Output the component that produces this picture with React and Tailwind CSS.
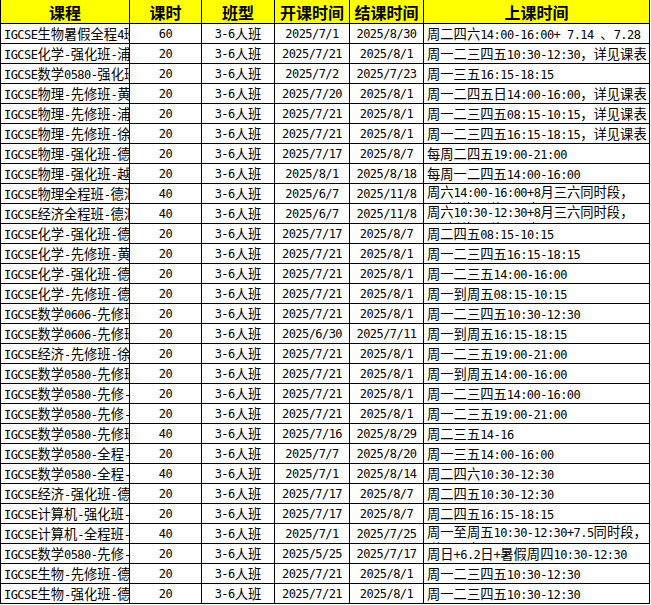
import React from 'react';

const rows = [
  ['IGCSE生物暑假全程4班', '60', '2025/7/1', '2025/8/30', '周二四六14:00-16:00+ 7.14 、7.28'],
  ['IGCSE化学-强化班-浦东', '20', '2025/7/21', '2025/8/1', '周一二三四五10:30-12:30，详见课表'],
  ['IGCSE数学0580-强化班', '20', '2025/7/2', '2025/7/23', '周一三五16:15-18:15'],
  ['IGCSE物理-先修班-黄浦', '20', '2025/7/20', '2025/8/1', '周一二四五日14:00-16:00，详见课表'],
  ['IGCSE物理-先修班-浦东', '20', '2025/7/21', '2025/8/1', '周一二三四五08:15-10:15，详见课表'],
  ['IGCSE物理-先修班-徐汇', '20', '2025/7/21', '2025/8/1', '周一二三四五16:15-18:15，详见课表'],
  ['IGCSE物理-强化班-德汇', '20', '2025/7/17', '2025/8/7', '每周二四五19:00-21:00'],
  ['IGCSE物理-强化班-越洋', '20', '2025/8/1', '2025/8/18', '每周一二四五14:00-16:00'],
  ['IGCSE物理全程班-德汇', '40', '2025/6/7', '2025/11/8', '周六14:00-16:00+8月三六同时段，', '7月暂停，详见课表'],
  ['IGCSE经济全程班-德汇', '40', '2025/6/7', '2025/11/8', '周六10:30-12:30+8月三六同时段，', '7月暂停，详见课表'],
  ['IGCSE化学-强化班-德汇', '20', '2025/7/17', '2025/8/7', '周二四五08:15-10:15'],
  ['IGCSE化学-先修班-黄浦', '20', '2025/7/21', '2025/8/1', '周一二三四五16:15-18:15'],
  ['IGCSE化学-强化班-德汇', '20', '2025/7/21', '2025/8/1', '周一二三五14:00-16:00'],
  ['IGCSE化学-先修班-德汇', '20', '2025/7/21', '2025/8/1', '周一到周五08:15-10:15'],
  ['IGCSE数学0606-先修班', '20', '2025/7/21', '2025/8/1', '周一二三四五10:30-12:30'],
  ['IGCSE数学0606-先修班', '20', '2025/6/30', '2025/7/11', '周一到周五16:15-18:15'],
  ['IGCSE经济-先修班-徐汇', '20', '2025/7/21', '2025/8/1', '周一二三五19:00-21:00'],
  ['IGCSE数学0580-先修班', '20', '2025/7/21', '2025/8/1', '周一到周五14:00-16:00'],
  ['IGCSE数学0580-先修-', '20', '2025/7/21', '2025/8/1', '周一二三四五14:00-16:00'],
  ['IGCSE数学0580-先修-', '20', '2025/7/21', '2025/8/1', '周一二三五19:00-21:00'],
  ['IGCSE数学0580-先修班', '40', '2025/7/16', '2025/8/29', '周二三五14-16'],
  ['IGCSE数学0580-全程-', '20', '2025/7/7', '2025/8/20', '周一三五14:00-16:00'],
  ['IGCSE数学0580-全程-', '40', '2025/7/1', '2025/8/14', '周二四六10:30-12:30'],
  ['IGCSE经济-强化班-德汇', '20', '2025/7/17', '2025/8/7', '周二四五10:30-12:30'],
  ['IGCSE计算机-强化班-', '20', '2025/7/17', '2025/8/7', '周二四五16:15-18:15'],
  ['IGCSE计算机-全程班-', '40', '2025/7/1', '2025/7/25', '周一至周五10:30-12:30+7.5同时段，', '详见课表'],
  ['IGCSE数学0580-先修-', '20', '2025/5/25', '2025/7/17', '周日+6.2日+暑假周四10:30-12:30'],
  ['IGCSE生物-先修班-德汇', '20', '2025/7/21', '2025/8/1', '周一二三四五10:30-12:30'],
  ['IGCSE生物-强化班-德汇', '20', '2025/7/21', '2025/8/1', '周一二三四五10:30-12:30'],
];

const heads = ['课程', '课时', '班型', '开课时间', '结课时间', '上课时间'];

// half-width latin in a mono font, CJK full width, like the sheet's font
function T({ s }) {
  return s.split(/([\x20-\x7e]+)/).map((p, i) =>
    /^[\x20-\x7e]+$/.test(p)
      ? <span key={i} className="font-['DejaVu_Sans_Mono',monospace] text-[12px] tracking-[-0.55px] whitespace-pre">{p}</span>
      : <span key={i}>{p}</span>
  );
}

export default function App() {
  return (
    <div className="w-[651px] h-[605px] bg-white overflow-hidden text-black font-['Noto_Sans_CJK_SC',sans-serif]">
      <div className="grid grid-cols-[129px_72px_73px_75px_74px_226px] border-l border-black w-[650px]">
        {heads.map(h => (
          <div key={h} className="h-[24px] bg-[#ffff00] border-r border-b border-black flex items-center justify-center text-[16px] font-bold leading-none">
            {h}
          </div>
        ))}
        {rows.map((r, i) => (
          <React.Fragment key={i}>
            <div className="h-[20px] border-r border-b border-black overflow-hidden whitespace-nowrap pl-[3px] text-[13.3px] leading-[19px]"><T s={r[0]} /></div>
            <div className="h-[20px] border-r border-b border-black flex items-center justify-center text-[13.3px]"><T s={r[1]} /></div>
            <div className="h-[20px] border-r border-b border-black flex items-center justify-center text-[13.3px]"><T s="3-6人班" /></div>
            <div className="h-[20px] border-r border-b border-black flex items-center justify-center text-[13.3px]"><T s={r[2]} /></div>
            <div className="h-[20px] border-r border-b border-black flex items-center justify-center text-[13.3px]"><T s={r[3]} /></div>
            {r[5] ? (
              <div className="h-[20px] border-r border-b border-black overflow-hidden whitespace-nowrap pl-[3px] text-[13.3px] leading-[16px]">
                <div><T s={r[4]} /></div>
                <div><T s={r[5]} /></div>
              </div>
            ) : (
              <div className="h-[20px] border-r border-b border-black overflow-hidden whitespace-nowrap pl-[3px] text-[13.3px] leading-[19px]"><T s={r[4]} /></div>
            )}
          </React.Fragment>
        ))}
      </div>
    </div>
  );
}
